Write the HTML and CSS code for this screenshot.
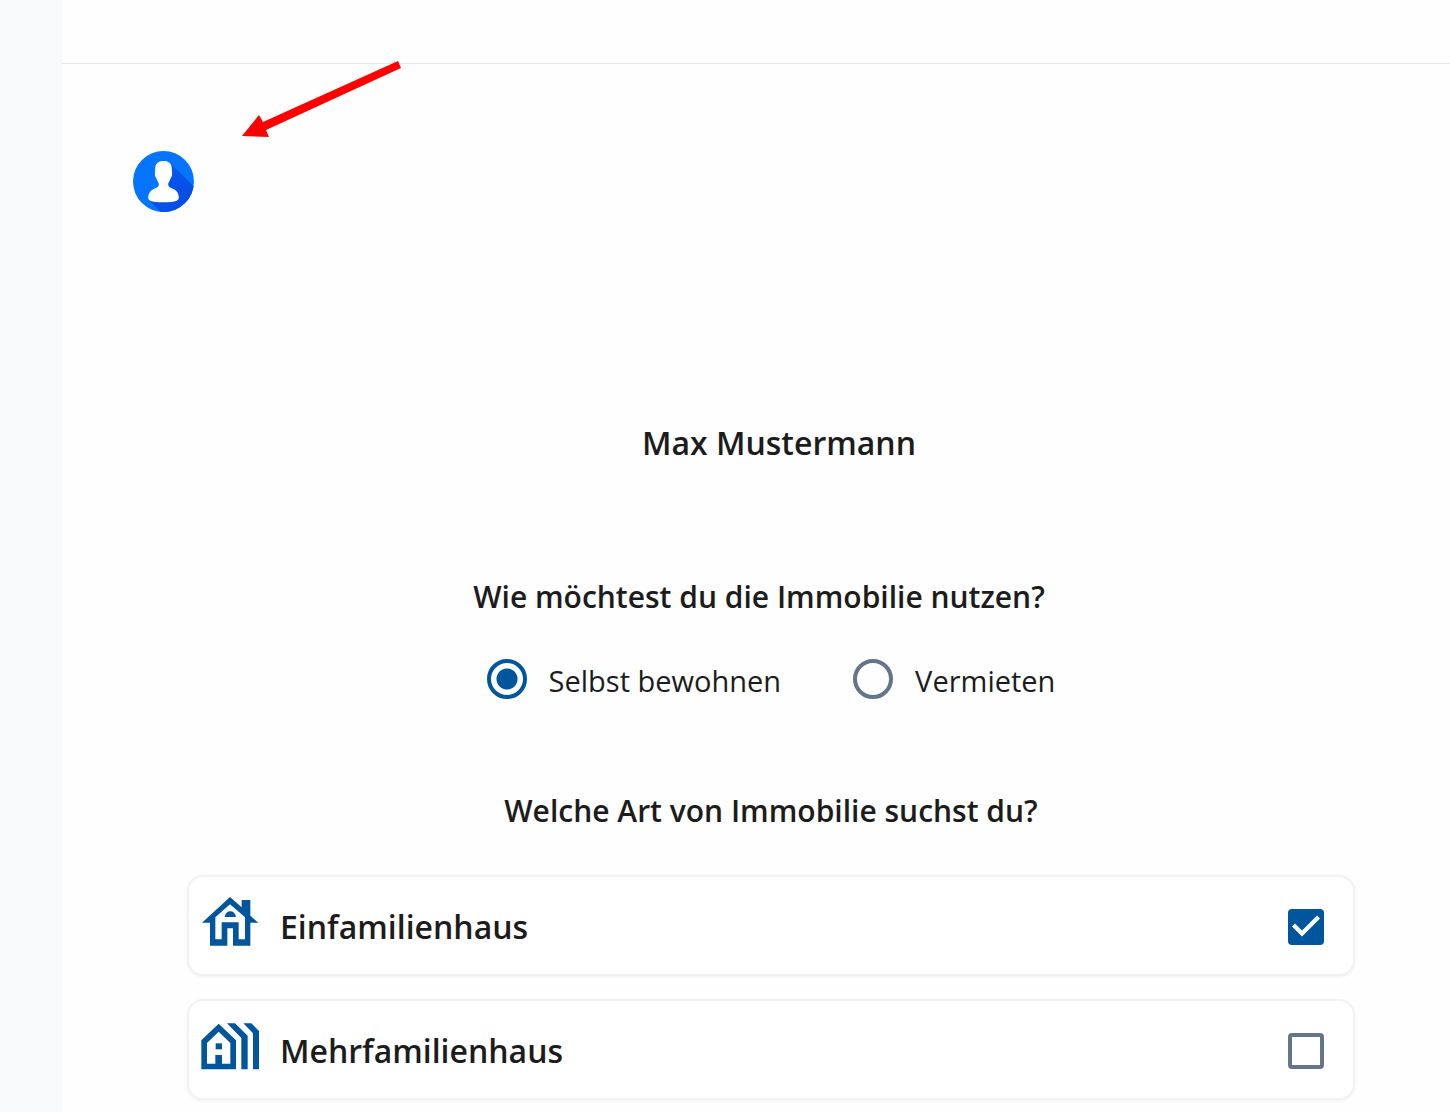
FILE: index.html
```
<!DOCTYPE html>
<html lang="de">
<head>
    <meta charset="UTF-8">
    <title>Profil</title>
    <link rel="stylesheet" href="styles.css">
</head>
<body>
    <aside class="sidebar"></aside>
    <main class="page">
        <header class="topbar"></header>
        <div class="content">
            <button class="avatar" type="button" aria-label="Profil">
                <svg viewBox="24 23 184 184">
                    <defs>
                        <linearGradient id="shade" x1="0" y1="0" x2="1" y2="1">
                            <stop offset="0" stop-color="#0a5cf5"/>
                            <stop offset="1" stop-color="#0746e0"/>
                        </linearGradient>
                        <clipPath id="disc"><circle cx="116" cy="115" r="92"/></clipPath>
                    </defs>
                    <circle cx="116" cy="115" r="92" fill="#0575ff"/>
                    <path clip-path="url(#disc)" fill="url(#shade)" d="M139 62 L215 138 V210 H110 L74 172 Z"/>
                    <path fill="#fff" d="M116 53 C132 53 141 61 141 76 L142 94 C142 101 138 103 136 109 C134 116 130 118 130 124 C130 131 137 134 144 137 C157 142 162 152 162 164 C162 172 153 175 140 177 C124 178 108 178 92 177 C79 175 70 172 70 164 C70 152 77 142 88 137 C95 134 102 131 102 124 C102 118 98 116 96 109 C94 103 90 101 90 94 L91 76 C91 61 100 53 116 53 Z"/>
                </svg>
            </button>
            <svg class="arrow" viewBox="0 0 160 78">
                <path fill="#ff0000" d="M0 76 L17 55 L21 62 L156 1 L159 8 L24 70 L27 77 Z"/>
            </svg>

            <form class="profile">
                <h1 class="name">Max Mustermann</h1>

                <fieldset class="usage">
                    <legend class="question">Wie möchtest du die Immobilie nutzen?</legend>
                    <div class="options">
                        <label class="option">
                            <input class="radio" type="radio" name="usage" checked>
                            Selbst bewohnen
                        </label>
                        <label class="option">
                            <input class="radio" type="radio" name="usage">
                            Vermieten
                        </label>
                    </div>
                </fieldset>

                <fieldset class="types">
                    <legend class="question">Welche Art von Immobilie suchst du?</legend>
                    <div class="cards">
                        <label class="card">
                            <svg class="card-icon" viewBox="60 69 180 162" fill-rule="evenodd">
                                <path d="M150 78 L185 109 V87 H211 V134 L235 155 H211 V224 H159 V172 H142 V224 H90 V155 H66 Z M150 100 L106 139 V205 H125 V154 H176 V205 H195 V139 Z"/>
                                <path d="M134 138 C136 127 142 121 151 121 C160 121 166 127 168 138 Z"/>
                            </svg>
                            <span class="card-title">Einfamilienhaus</span>
                            <input class="check" type="checkbox" checked>
                        </label>
                        <label class="card">
                            <svg class="card-icon" viewBox="60 441 180 162" fill-rule="evenodd">
                                <path d="M116 458 L168 508 V595 H64 V508 Z M116 482 L81 516 V578 H106 V552 H126 V578 H151 V516 Z"/>
                                <path d="M107 517 H126 V535 H107 Z"/>
                                <path d="M141 457 H165 L203 494 V595 H184 V501 Z"/>
                                <path d="M190 457 H214 L237 480 V595 H219 V487 Z"/>
                            </svg>
                            <span class="card-title">Mehrfamilienhaus</span>
                            <input class="check" type="checkbox">
                        </label>
                    </div>
                </fieldset>
            </form>
        </div>
    </main>
</body>
</html>
```

FILE: styles.css
```
* {
    box-sizing: border-box;
}

body {
    font-family: "Open Sans", "Noto Sans", sans-serif;
    color: #1c1c1c;
    background-color: #fefefe;
    margin: 0;
    min-height: 100vh;
    display: flex;
}

.sidebar {
    width: 62px;
    flex-shrink: 0;
    background-color: #f9fafc;
    border-right: 1px solid #f6f7f9;
}

.page {
    flex: 1;
}

.topbar {
    height: 64px;
    border-bottom: 1px solid #e5e8ee;
}

.content {
    position: relative;
    padding: 87px 95px 11px 125px;
}

.avatar {
    display: block;
    width: 61px;
    height: 61px;
    margin-left: -54px;
    padding: 0;
    border: none;
    border-radius: 50%;
    background: none;
    cursor: pointer;
}

.avatar svg {
    display: block;
    width: 100%;
}

/* pointer lies over the header line */
.arrow {
    position: absolute;
    top: -4px;
    left: 180px;
    width: 160px;
    height: 78px;
}

.profile {
    padding-top: 209px;
}

.name {
    font-size: 32px;
    font-weight: 600;
    line-height: 44px;
    text-align: center;
    margin: 0;
    padding-left: 16px;
}

fieldset {
    border: none;
    margin: 0;
    padding: 0;
    min-width: 0;
}

.question {
    width: 100%;
    padding: 0;
    font-size: 30px;
    font-weight: 600;
    line-height: 40px;
    text-align: center;
}

.usage {
    margin-top: 112px;
}

.usage .question {
    padding-right: 24px;
}

.options {
    display: flex;
    justify-content: center;
    gap: 72px;
    padding-top: 42px;
}

.option {
    display: flex;
    align-items: center;
    gap: 22px;
    font-size: 29px;
    line-height: 44px;
}

.radio {
    appearance: none;
    width: 40px;
    height: 40px;
    margin: 0 0 4px;
    border: 4px solid #64748b;
    border-radius: 50%;
}

.radio:checked {
    border-color: #00569d;
    background: radial-gradient(circle, #00569d 10px, transparent 11px);
}

.types {
    margin-top: 88px;
}

.cards {
    display: flex;
    flex-direction: column;
    gap: 23px;
    padding-top: 44px;
}

.card {
    display: flex;
    align-items: center;
    height: 101px;
    padding: 2px 29px 0 11px;
    border: 2px solid #f2f2f3;
    border-radius: 16px;
    background-color: #fff;
    box-shadow: 0 1px 3px rgba(0, 0, 0, 0.06);
}

.card-icon {
    width: 60px;
    height: 54px;
    margin-bottom: 12px;
    fill: #00569d;
}

.card-title {
    flex: 1;
    padding-left: 20px;
    font-size: 32px;
    font-weight: 600;
}

.check {
    appearance: none;
    width: 36px;
    height: 36px;
    margin: 0;
    border: 4px solid #64748b;
    border-radius: 4px;
}

.check:checked {
    border: none;
    background-color: #00569d;
}

.check:checked::before {
    content: "";
    display: block;
    height: 36px;
    background-color: #fff;
    clip-path: polygon(4px 18px, 7px 15px, 14px 22px, 29px 7px, 32px 10px, 14px 28px);
}
```
